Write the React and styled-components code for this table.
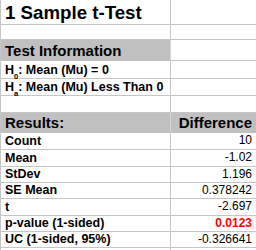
import React from "react";
import styled, { createGlobalStyle } from "styled-components";

const GlobalStyle = createGlobalStyle`
  html, body {
    margin: 0;
    padding: 0;
    background: #fff;
    overflow: hidden;
  }
  body {
    font-family: "Liberation Sans", Arial, sans-serif;
  }
`;

const rows = [
  { label: "Count", value: "10" },
  { label: "Mean", value: "-1.02" },
  { label: "StDev", value: "1.196" },
  { label: "SE Mean", value: "0.378242" },
  { label: "t", value: "-2.697" },
  { label: "p-value (1-sided)", value: "0.0123", highlight: true },
  { label: "UC (1-sided, 95%)", value: "-0.326641" },
];

const heights = [17, 17, 16, 16, 17, 16, 16];

export default function App() {
  return (
    <>
      <GlobalStyle />
      <Sheet>
        <Row $h={25}>
          <Cell $size={18.7} $bold>
            1 Sample t-Test
          </Cell>
          <Cell />
        </Row>
        <Row $h={15}>
          <Cell />
          <Cell />
        </Row>
        <Row $h={21}>
          <Cell $fill $size={15} $bold>
            Test Information
          </Cell>
          <Cell />
        </Row>
        <Row $h={18}>
          <Cell $size={12.5} $bold>
            H<Sub>0</Sub>: Mean (Mu) = 0
          </Cell>
          <Cell />
        </Row>
        <Row $h={17}>
          <Cell $size={12.5} $bold>
            H<Sub>a</Sub>: Mean (Mu) Less Than 0
          </Cell>
          <Cell />
        </Row>
        <Row $h={17}>
          <Cell />
          <Cell />
        </Row>
        <Row $h={20}>
          <Cell $fill $size={15} $bold>
            Results:
          </Cell>
          <Cell $fill $size={15} $bold $right>
            Difference
          </Cell>
        </Row>
        {rows.map((r, i) => (
          <Row key={r.label} $h={heights[i]}>
            <Cell $size={12.5} $bold>
              {r.label}
            </Cell>
            <Cell
              $size={12}
              $right
              $bold={r.highlight}
              $color={r.highlight ? "#ff0000" : "#000"}
            >
              {r.value}
            </Cell>
          </Row>
        ))}
        <Row $h={17}>
          <Cell />
          <Cell />
        </Row>
      </Sheet>
    </>
  );
}

const Sheet = styled.div`
  width: 256px;
  height: 250px;
  overflow: hidden;
  display: flex;
  flex-direction: column;
  border-left: 1px solid #c6c6c6;
  box-sizing: border-box;
`;

const Row = styled.div`
  flex: 0 0 auto;
  height: ${p => p.$h}px;
  display: grid;
  grid-template-columns: 170px 86px;
`;

const Cell = styled.div`
  box-sizing: border-box;
  display: flex;
  align-items: flex-end;
  justify-content: ${p => (p.$right ? "flex-end" : "flex-start")};
  padding: 0 5px 1px 4px;
  white-space: nowrap;
  overflow: visible;
  font-size: ${p => p.$size || 12}px;
  font-weight: ${p => (p.$bold ? 700 : 400)};
  color: ${p => p.$color || "#000"};
  line-height: 1.15;
  background: ${p => (p.$fill ? "#c0c0c0" : "transparent")};
  border-bottom: 1px solid ${p => (p.$fill ? "#c0c0c0" : "#c6c6c6")};
  &:first-child {
    border-right: 1px solid ${p => (p.$fill ? "#d6d6d6" : "#c6c6c6")};
  }
`;

const Sub = styled.sub`
  font-size: 0.6em;
  vertical-align: -0.25em;
  line-height: 0;
`;
